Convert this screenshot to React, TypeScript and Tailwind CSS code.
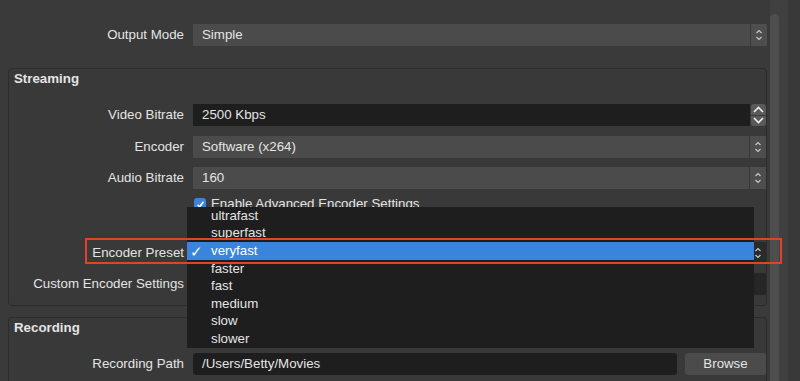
import React from 'react'

function ComboArrows({ dark = false }: { dark?: boolean }) {
  return (
    <div className={`ml-px flex w-[16px] items-center justify-center ${dark ? 'bg-[#2a2a2a]' : 'bg-[#4e4e4e]'}`}>
      <svg width="8" height="14" viewBox="0 0 8 14" fill="none" stroke="#c8c8c8" strokeWidth="1.2">
        <path d="M1.5 5 L4 2.5 L6.5 5" />
        <path d="M1.5 9 L4 11.5 L6.5 9" />
      </svg>
    </div>
  )
}

function SpinArrows() {
  return (
    <div className="ml-px flex w-[15px] flex-col gap-px">
      <div className="flex flex-1 items-center justify-center rounded-t-[3px] bg-[#5a5a5a]">
        <svg width="11" height="7" viewBox="0 0 11 7" fill="none" stroke="#f0f0f0" strokeWidth="1.6">
          <path d="M1 6 L5.5 1.5 L10 6" />
        </svg>
      </div>
      <div className="flex flex-1 items-center justify-center rounded-b-[3px] bg-[#5a5a5a]">
        <svg width="11" height="7" viewBox="0 0 11 7" fill="none" stroke="#f0f0f0" strokeWidth="1.6">
          <path d="M1 1 L5.5 5.5 L10 1" />
        </svg>
      </div>
    </div>
  )
}

function Row({ label, labelW, children, className = '' }: { label: string; labelW: string; children: React.ReactNode; className?: string }) {
  return (
    <div className={`flex h-[22px] items-stretch ${className}`}>
      <div className={`${labelW} flex items-center justify-end whitespace-nowrap`}>{label}</div>
      <div className="ml-[9px] flex flex-1">{children}</div>
    </div>
  )
}

const presets = ['ultrafast', 'superfast', 'veryfast', 'faster', 'fast', 'medium', 'slow', 'slower']

export default function App() {
  return (
    <div className="relative flex h-[381px] w-[800px] overflow-hidden bg-[#3a3a3a] font-['Liberation_Sans',Arial,sans-serif] text-[13.3px] text-[#e4e4e4]">
      {/* Settings content */}
      <div className="w-[767px] pt-[24px]">
        <Row label="Output Mode" labelW="w-[184px]">
          <div className="flex flex-1 items-center bg-[#4b4b4b] pl-[9px]">Simple</div>
          <ComboArrows />
        </Row>

        {/* Streaming */}
        <div className="ml-[8px] mt-[22px] h-[238px] rounded-[4px] border border-[#2c2c2c] bg-[#393939]">
          <div className="h-[20px] pl-[5px] font-bold leading-[20px]">Streaming</div>

          <Row label="Video Bitrate" labelW="w-[175px]" className="mt-[15px]">
            <div className="flex flex-1 items-center bg-[#1e1e1e] pl-[9px]">2500 Kbps</div>
            <SpinArrows />
          </Row>
          <Row label="Encoder" labelW="w-[175px]" className="mt-[10px]">
            <div className="flex flex-1 items-center bg-[#4b4b4b] pl-[9px]">Software (x264)</div>
            <ComboArrows />
          </Row>
          <Row label="Audio Bitrate" labelW="w-[175px]" className="mt-[9px]">
            <div className="flex flex-1 items-center bg-[#4b4b4b] pl-[9px]">160</div>
            <ComboArrows />
          </Row>

          <div className="ml-[185px] mt-[8px] flex h-[14px] items-center">
            <div className="flex h-[12px] w-[12px] items-center justify-center rounded-[3px] bg-[#3a85db]">
              <svg width="9" height="9" viewBox="0 0 9 9" fill="none" stroke="#ffffff" strokeWidth="1.6">
                <path d="M1.5 4.8 L3.6 6.8 L7.5 1.8" />
              </svg>
            </div>
            <span className="ml-[5px]">Enable Advanced Encoder Settings</span>
          </div>

          <Row label="Encoder Preset" labelW="w-[175px]" className="mt-[31px]">
            <div className="flex-1 bg-[#4b4b4b]" />
            <ComboArrows dark />
          </Row>
          <Row label="Custom Encoder Settings" labelW="w-[175px]" className="mt-[9px]">
            <div className="flex-1 bg-[#262626]" />
          </Row>
        </div>

        {/* Recording */}
        <div className="ml-[8px] mt-[11px] h-[80px] rounded-t-[4px] border border-b-0 border-[#2c2c2c] bg-[#393939]">
          <div className="h-[20px] pl-[5px] font-bold leading-[20px]">Recording</div>
          <Row label="Recording Path" labelW="w-[175px]" className="mt-[15px]">
            <div className="flex flex-1 items-center rounded-[3px] bg-[#1e1e1e] pl-[9px]">/Users/Betty/Movies</div>
            <div className="ml-[8px] flex w-[81px] items-center justify-center rounded-[3px] bg-[#4b4b4b]">Browse</div>
          </Row>
        </div>
      </div>

      {/* Scrollbar */}
      <div className="ml-[3px] flex w-[18px] bg-[#404040] pt-[14px]">
        <div className="w-[9px] rounded-t-full bg-[#4e4e4e]" />
      </div>
      <div className="flex-1 bg-[#393939]" />

      {/* Open preset dropdown */}
      <div className="absolute left-[187px] top-[207px] h-[141px] w-[567px] bg-[#1e1e1e]">
        {presets.map(p =>
          p === 'veryfast' ? (
            <div key={p} className="flex h-[18px] items-center bg-[#3a85db] text-white">
              <span className="w-[24px] pl-[3px] text-[15px] leading-none">✓</span>
              <span>{p}</span>
            </div>
          ) : (
            <div key={p} className="flex h-[17.5px] items-center pl-[24px]">{p}</div>
          )
        )}
      </div>

      {/* Highlight annotation */}
      <div className="absolute left-[85px] top-[238px] h-[26px] w-[697px] border-2 border-[#e0432c]" />
    </div>
  )
}
